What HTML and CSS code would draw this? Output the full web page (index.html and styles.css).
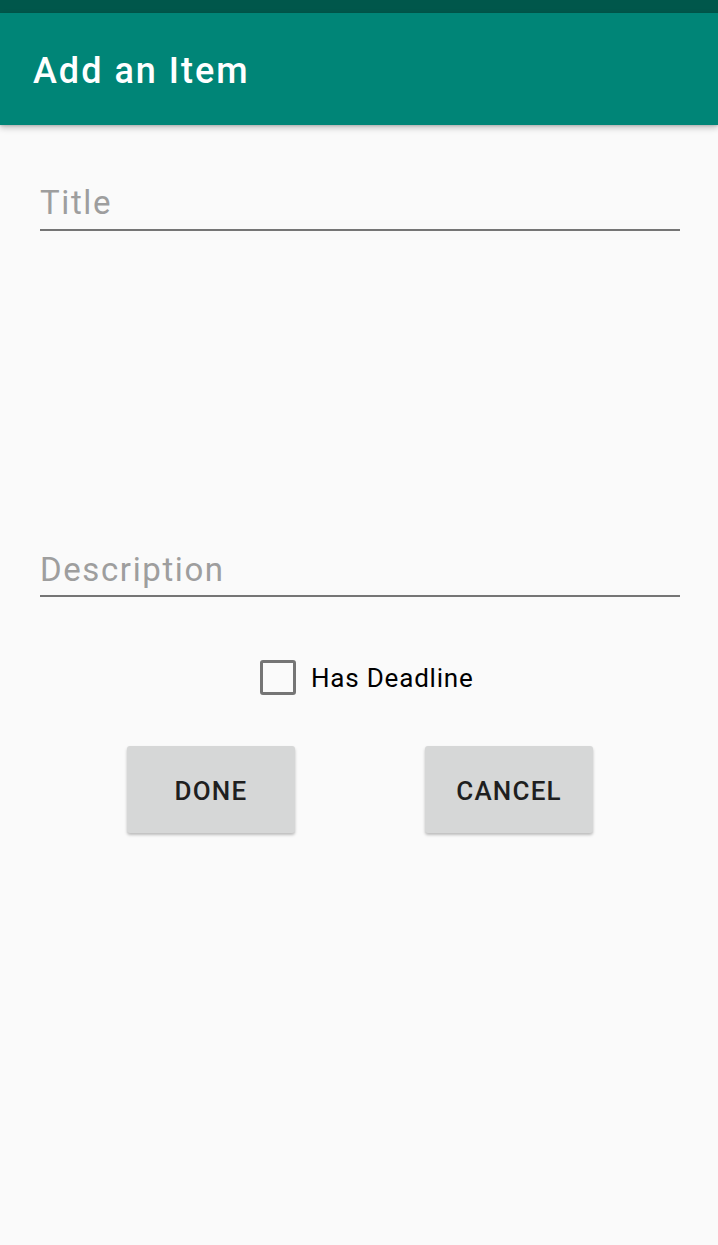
FILE: index.html
```html
<!DOCTYPE html>
<html>
<head>
<meta charset="utf-8">
<link rel="stylesheet" href="styles.css">
</head>
<body>
<div class="status"></div>
<header class="appbar"><h1 class="appbar-title">Add an Item</h1></header>
<main class="content">
  <div class="field field-title">Title</div>
  <div class="field field-desc">Description</div>
  <label class="check-row">
    <span class="checkbox"></span>
    <span class="check-label">Has Deadline</span>
  </label>
  <div class="buttons">
    <button class="btn">Done</button>
    <button class="btn">Cancel</button>
  </div>
</main>
</body>
</html>
```
FILE: styles.css
```css
html, body {
  margin: 0;
  padding: 0;
  background: #fafafa;
  font-family: Roboto, "Noto Sans", sans-serif;
}
body {
  width: 718px;
  height: 1245px;
  overflow: hidden;
}
.status {
  height: 13px;
  background: #00574b;
}
.appbar {
  height: 112px;
  background: #008577;
  display: flex;
  align-items: center;
  padding-left: 33px;
  box-shadow: 0 3px 6px rgba(0,0,0,0.22), 0 1px 2px rgba(0,0,0,0.12);
  position: relative;
  z-index: 1;
}
.appbar-title {
  margin: 0;
  color: #ffffff;
  font-size: 36px;
  font-weight: 500;
  letter-spacing: 2px;
  line-height: 40px;
  padding-top: 4px;
}
.content {
  padding: 0 38px 0 40px;
  display: flex;
  flex-direction: column;
}
.field {
  font-size: 33px;
  letter-spacing: 1.6px;
  line-height: 37px;
  color: #9e9e9e;
  padding-bottom: 8px;
  border-bottom: 2px solid #757575;
}
.field-title {
  margin-top: 59px;
}
.field-desc {
  margin-top: 320px;
  padding-bottom: 7px;
}
.check-row {
  margin-top: 62px;
  display: flex;
  align-items: center;
  align-self: flex-start;
  margin-left: 220px;
  height: 36px;
}
.checkbox {
  width: 30px;
  height: 29px;
  border: 3px solid #757575;
  border-radius: 3px;
  box-sizing: content-box;
}
.check-label {
  margin-left: 15px;
  font-size: 26px;
  letter-spacing: 0.8px;
  color: #000000;
  padding-top: 2px;
}
.buttons {
  margin-top: 51px;
  display: flex;
  gap: 130px;
  padding-left: 87px;
}
.btn {
  width: 168px;
  height: 87px;
  border: none;
  border-radius: 3px;
  background: #d6d7d7;
  box-shadow: 0 2px 3px rgba(0,0,0,0.25);
  font-family: Roboto, "Noto Sans", sans-serif;
  font-size: 26px;
  font-weight: 500;
  letter-spacing: 1.2px;
  text-transform: uppercase;
  color: #1f1f1f;
  padding: 3px 0 0 0;
}
```
